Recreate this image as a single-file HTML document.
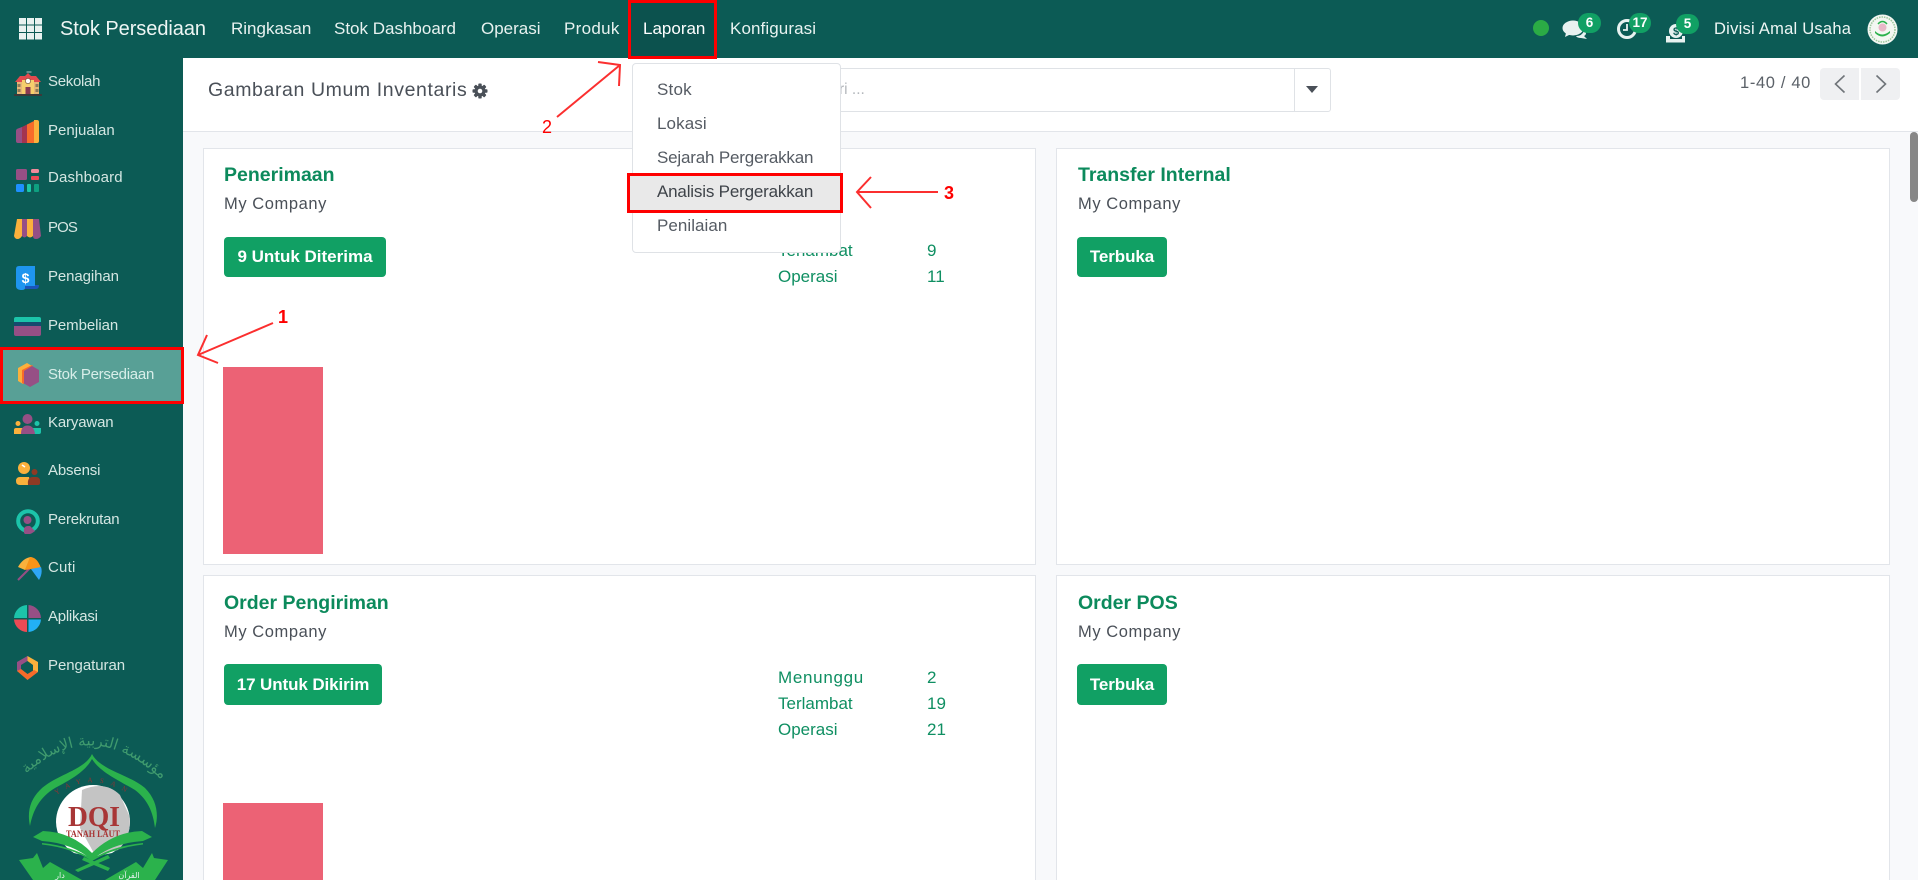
<!DOCTYPE html>
<html lang="id"><head><meta charset="utf-8"><title>Stok Persediaan</title>
<style>
html,body{margin:0;padding:0;width:1918px;height:880px;overflow:hidden;background:#f8f9fb}
body{position:relative;font-family:"Liberation Sans","Noto Sans CJK SC",sans-serif;color:#4a5058}
div,span,svg{position:absolute;box-sizing:border-box}
.t{white-space:nowrap;line-height:24px;height:24px}
.nav{color:#e8f2f0;font-size:17px;top:17px}
.side{color:#d4e6e2;font-size:15px;left:48px}
.card{background:#fff;border:1px solid #e2e5ea}
.title{color:#0c8a5c;font-size:19.5px;font-weight:bold}
.co{color:#4a5058;font-size:16.5px;letter-spacing:.57px}
.btn{background:#11a064;border-radius:4px;color:#fff;font-weight:bold;font-size:17px;text-align:center}
.st{color:#0f8f62;font-size:17px}
.mi{color:#555b63;font-size:17px;left:657px}
.bdg{background:#11a064;color:#fff;border-radius:11px;font-size:13.5px;font-weight:bold;text-align:center;height:20px;line-height:20px}
</style></head><body>

<div style="left:0;top:0;width:1918px;height:58px;background:#0c5b55"></div>
<div style="left:0;top:58px;width:183px;height:822px;background:#0c5b55"></div>
<div style="left:183px;top:58px;width:1735px;height:74px;background:#fff;border-bottom:1px solid #e2e5ea"></div>

<!-- apps grid -->
<svg style="left:19px;top:18px" width="23" height="22" viewBox="0 0 23 22" fill="#e8f2f0"><rect x="0" y="0" width="7" height="6.5"/><rect x="8" y="0" width="7" height="6.5"/><rect x="16" y="0" width="7" height="6.5"/><rect x="0" y="7.5" width="7" height="6.5"/><rect x="8" y="7.5" width="7" height="6.5"/><rect x="16" y="7.5" width="7" height="6.5"/><rect x="0" y="15" width="7" height="6.5"/><rect x="8" y="15" width="7" height="6.5"/><rect x="16" y="15" width="7" height="6.5"/></svg>
<span class="t" style="left:60px;top:17px;color:#eef6f4;font-size:20px;letter-spacing:-.05px">Stok Persediaan</span>
<span class="t nav" style="left:231px">Ringkasan</span>
<span class="t nav" style="left:334px">Stok Dashboard</span>
<span class="t nav" style="left:481px">Operasi</span>
<span class="t nav" style="left:564px;letter-spacing:.3px">Produk</span>
<div style="left:628px;top:0;width:89px;height:59px;background:#0c524e"></div>
<span class="t nav" style="left:643px;color:#fff">Laporan</span>
<span class="t nav" style="left:730px;letter-spacing:.1px">Konfigurasi</span>

<!-- systray -->
<div style="left:1533px;top:20px;width:16px;height:16px;border-radius:50%;background:#2bab45"></div>
<svg style="left:1562px;top:19px" width="26" height="22" viewBox="0 0 26 22" fill="#e8f2f0"><ellipse cx="11" cy="9" rx="10.5" ry="7.5"/><path d="M4 14 L3 18 L9 15Z"/><path d="M14 17 Q20 17 22 12 L24 14 Q24 16 22 17 L25 20 L19 19 Q15 19 14 17Z"/></svg>
<span class="bdg" style="left:1578px;top:13px;width:23px">6</span>
<svg style="left:1616px;top:18px" width="22" height="22" viewBox="0 0 22 22" fill="none" stroke="#e8f2f0"><circle cx="11" cy="11" r="8.5" stroke-width="3"/><path d="M11 6V12H7" stroke-width="1.8"/></svg>
<span class="bdg" style="left:1629px;top:13px;width:22px">17</span>
<svg style="left:1665px;top:23px" width="22" height="20" viewBox="0 0 22 20"><circle cx="11" cy="8" r="7" fill="#e8f2f0"/><rect x="1" y="13" width="4" height="4" fill="#e8f2f0"/><rect x="17" y="13" width="3" height="4" fill="#e8f2f0"/><rect x="1" y="16" width="19" height="3.5" fill="#e8f2f0"/><text x="11" y="12" font-size="11" font-weight="bold" text-anchor="middle" fill="#0c5b55" font-family="Liberation Sans">$</text></svg>
<span class="bdg" style="left:1676px;top:14px;width:23px">5</span>
<span class="t" style="left:1714px;top:17px;color:#eef6f4;font-size:16.5px;letter-spacing:.25px">Divisi Amal Usaha</span>
<svg style="left:1867px;top:14px" width="31" height="31" viewBox="0 0 31 31"><circle cx="15.5" cy="15.5" r="15" fill="#f3f7f2"/><circle cx="15.5" cy="15.5" r="12.5" fill="none" stroke="#9cc79c" stroke-width="1.5" stroke-dasharray="1.5 1"/><circle cx="15.5" cy="13.5" r="4" fill="#e8b8c8"/><path d="M8 17 Q15 24 23 17 L23 19 Q15 26 8 19Z" fill="#2bb24c"/><path d="M11 10 Q15.5 5 20 10" fill="none" stroke="#2bb24c" stroke-width="1.5"/></svg>

<!-- Sidebar -->
<div style="left:0;top:347px;width:184px;height:57px;background:#58a096;border:3px solid #fe0000"></div>

<svg style="left:14px;top:70px" width="28" height="27" viewBox="0 0 28 27"><rect x="12.5" y="1" width="5" height="2" fill="#5f8d8a"/><rect x="3" y="12" width="22" height="12" fill="#e7b676"/><path d="M1 12 L6 6 H22 L27 12Z" fill="#e24a4e"/><path d="M8 10 L14 4 L20 10 V24 H8Z" fill="#f6cf6c"/><path d="M7 10 L14 3 L21 10" fill="#e24a4e"/><circle cx="14" cy="11" r="2.6" fill="#fff" stroke="#7a5a3a" stroke-width=".7"/><rect x="11.5" y="17" width="5" height="7" fill="#8a3a52"/><rect x="3.5" y="14" width="3" height="3" fill="#8d7a5a"/><rect x="21.5" y="14" width="3" height="3" fill="#8d7a5a"/><rect x="3.5" y="19" width="3" height="3" fill="#8d7a5a"/><rect x="21.5" y="19" width="3" height="3" fill="#8d7a5a"/><rect x="0" y="24" width="28" height="2" fill="#3a3a3a"/></svg>

<svg style="left:16px;top:120px" width="23" height="23" viewBox="0 0 23 23"><path d="M0 11 Q0 9 2 8.500 L6 7 V23 H2 Q0 23 0 21Z" fill="#964f85"/><path d="M6 7 L11 4.500 V23 H6Z" fill="#a3344f"/><path d="M11 4.500 L18 1 V23 H11Z" fill="#f76b2a"/><path d="M18 0 H21 Q23 0 23 2 V21 Q23 23 21 23 H18Z" fill="#fbb13c"/></svg>

<svg style="left:16px;top:169px" width="23" height="23" viewBox="0 0 23 23"><rect width="11" height="11" rx="1.500" fill="#964f85"/><rect x="15" y="0" width="8" height="4" rx="1.500" fill="#f08a9a"/><rect x="15" y="7" width="8" height="4" rx="1" fill="#ee4a55"/><rect y="15" width="8" height="8" rx="1.500" fill="#1e90ff"/><rect x="11" y="15" width="4" height="8" rx="1" fill="#1cc8a8"/><rect x="18" y="15" width="5" height="8" rx="1" fill="#0ea080"/></svg>

<svg style="left:14px;top:219px" width="27" height="21" viewBox="0 0 27 21"><path d="M3 0 H8 L8 17 Q6 20 3.500 20 Q1 20 0 17Z" fill="#fbb13c"/><path d="M8 0 H13 V17 Q10.500 20 8 17Z" fill="#964f85"/><path d="M13 0 H19 V17 Q16 20 13 17Z" fill="#fbb13c"/><path d="M19 0 H25 L27 17 Q25 20 22 20 Q19 20 19 17Z" fill="#964f85"/></svg>

<svg style="left:16px;top:266px" width="24" height="25" viewBox="0 0 24 25"><path d="M8 19 H23 Q23 23 20 23 H8Z" fill="#1b55b8"/><path d="M3 0 H19 V20 H9 V22 Q9 24 6 24 Q0 24 0 20 V3 Q0 0 3 0Z" fill="#1e95ef"/><text x="9.500" y="17" font-size="14" font-weight="bold" text-anchor="middle" fill="#fff" font-family="Liberation Sans">$</text></svg>

<svg style="left:14px;top:317px" width="27" height="19" viewBox="0 0 27 19"><path d="M0 2 Q0 0 2 0 H25 Q27 0 27 2 V5 H0Z" fill="#1cc4aa"/><rect y="5" width="27" height="4" fill="#174a6e"/><path d="M0 9 H27 V17 Q27 19 25 19 H2 Q0 19 0 17Z" fill="#964f85"/></svg>

<svg style="left:18px;top:363px" width="21" height="24" viewBox="0 0 21 24"><path d="M9 0 L0 5 V18 L5 21 V8 L14 3Z" fill="#fbb13c"/><path d="M14 2 L4 7 V20 L6 21 V8 L15 3Z" fill="#f76b2a"/><path d="M14 3 L21 7 V19 L12 24 L6 20.500 V8Z" fill="#964f85"/></svg>

<svg style="left:14px;top:414px" width="27" height="20" viewBox="0 0 27 20"><path d="M14 14 H27 V18 Q27 20 25 20 H14Z" fill="#1cc4aa"/><path d="M0 20 V16 Q0 14 2 14 H12 V20Z" fill="#fbb13c"/><circle cx="4" cy="9.500" r="2.500" fill="#fbb13c"/><circle cx="23" cy="9.500" r="2.500" fill="#1cc4aa"/><circle cx="13.500" cy="5" r="5" fill="#964f85"/><path d="M7 20 Q7 11.500 13.500 11.500 Q20 11.500 21 20Z" fill="#964f85"/></svg>

<svg style="left:16px;top:462px" width="24" height="23" viewBox="0 0 24 23"><circle cx="8" cy="6" r="6" fill="#fbb13c"/><path d="M6 3 L9 5" stroke="#fff" stroke-width="1.500"/><circle cx="18.500" cy="10" r="3" fill="#8f3a24"/><path d="M0 19 Q0 15 4 15 H13 L15 23 H4 Q0 23 0 19Z" fill="#fbb13c"/><path d="M12 23 Q11 15 17 15 H20 Q24 15 24 19 V21 Q24 23 22 23Z" fill="#8f3a24"/></svg>

<svg style="left:16px;top:509px" width="24" height="25" viewBox="0 0 24 25"><circle cx="12" cy="12" r="9.800" fill="none" stroke="#1cc4aa" stroke-width="4"/><circle cx="11.500" cy="11" r="4" fill="#964f85"/><path d="M8 24 Q7 17 12 17 H14 L19 22 Q16 24.500 14 25 H9Z" fill="#964f85"/></svg>

<svg style="left:17px;top:556px" width="25" height="25" viewBox="0 0 25 25"><path d="M1 24 L13 12" stroke="#964f85" stroke-width="2"/><path d="M1 11 Q6 2 14 1 L13 3 L8 14Z" fill="#fbb13c"/><path d="M13 1 Q20 1 24 12 L14 13 L8 14Z" fill="#f99418"/><path d="M24 11 Q26 17 22 24 L14 13Z" fill="#2ea6f5"/></svg>

<svg style="left:14px;top:605px" width="27" height="27" viewBox="0 0 27 27"><path d="M13 0 V13 H0 A13.500 13.500 0 0 1 13 0Z" fill="#1cc4aa"/><path d="M14.500 0 A13.500 13.500 0 0 1 27 13 H14.500Z" fill="#964f85"/><path d="M0 14.500 H13 V27 A13.500 13.500 0 0 1 0 14.500Z" fill="#ee4a55"/><path d="M14.500 14.500 H27 A13.500 13.500 0 0 1 14.500 27Z" fill="#22b0f5"/></svg>

<svg style="left:17px;top:656px" width="21" height="24" viewBox="0 0 21 24"><path d="M10.500 0 L0 6 V15 L4 17 V9 L10.500 5Z" fill="#964f85"/><path d="M10.500 0 L21 6 V16 L16 15 V9 L10.500 5Z" fill="#fbb13c"/><path d="M0 15 L4 13 L10.500 18 L17 14 L21 16 L10.500 24Z" fill="#f76b2a"/><circle cx="10.500" cy="11.500" r="5" fill="#0c5b55"/></svg>

<span class="t side" style="top:70px;letter-spacing:-.3px">Sekolah</span>
<span class="t side" style="top:119px">Penjualan</span>
<span class="t side" style="top:166px;letter-spacing:.15px">Dashboard</span>
<span class="t side" style="top:216px;letter-spacing:-.9px">POS</span>
<span class="t side" style="top:265px;letter-spacing:-.1px">Penagihan</span>
<span class="t side" style="top:314px;letter-spacing:-.08px">Pembelian</span>
<span class="t side" style="top:363px;color:#d8eee9;letter-spacing:-.27px">Stok Persediaan</span>
<span class="t side" style="top:411px;letter-spacing:-.15px">Karyawan</span>
<span class="t side" style="top:459px;letter-spacing:-.15px">Absensi</span>
<span class="t side" style="top:508px;letter-spacing:-.2px">Perekrutan</span>
<span class="t side" style="top:556px;letter-spacing:.2px">Cuti</span>
<span class="t side" style="top:605px;letter-spacing:-.25px">Aplikasi</span>
<span class="t side" style="top:654px;letter-spacing:-.05px">Pengaturan</span>

<!-- Logo -->
<svg style="left:15px;top:725px" width="160" height="155" viewBox="15 725 160 155">
<defs><path id="arc" d="M24 776 Q92 712 164 782"/><path id="yy" d="M58 794 Q92 770 130 795"/></defs>
<text font-size="15" fill="#3f9a6e" font-family="DejaVu Sans,sans-serif"><textPath href="#arc" startOffset="50%" text-anchor="middle">مؤسسة التربية الإسلامية</textPath></text>
<path d="M92 754 C85 770 55 775 40 790 C30 800 27 812 30 826 C33 810 40 797 55 788 C70 780 85 772 92 759 C100 772 118 780 135 790 C148 800 153 812 155 828 C159 815 157 800 145 788 C130 775 100 770 92 754Z" fill="#2bb24c"/>
<text font-size="7" fill="#8f3434" font-family="Liberation Serif,serif" letter-spacing="7"><textPath href="#yy" startOffset="50%" text-anchor="middle">YAYASAN</textPath></text>
<path d="M56 822 A37 37 0 0 1 130 822 A37 37 0 0 1 112 853 L92 857 L74 853 A37 37 0 0 1 56 822Z" fill="#fff"/>
<path d="M129 815 A37 37 0 0 1 118 850 L95 855 L80 828 L82 790 Q105 780 120 795Z" fill="#c4c4c4"/>
<text x="94" y="826" text-anchor="middle" font-family="Liberation Serif,serif" font-size="28" font-weight="bold" fill="#a83636" textLength="52" lengthAdjust="spacingAndGlyphs">DQI</text>
<text x="93" y="837" text-anchor="middle" font-family="Liberation Serif,serif" font-size="9" font-weight="bold" fill="#a83636" textLength="54" lengthAdjust="spacingAndGlyphs">TANAH LAUT</text>
<path d="M33 837 L43 831 Q72 832 92 853 Q113 832 142 831 L152 837 L143 841 Q112 843 92 860 Q72 843 42 841Z" fill="#2bb24c"/>
<path d="M42 843 Q72 846 92 859 Q113 846 143 843 V844.500 Q113 848 92 861 Q72 848 42 844.500Z" fill="#2bb24c"/>
<path d="M75 870 L108 855 L110 858 L78 872Z M84 857 L110 868 L108 871 L82 860Z" fill="#2bb24c"/>
<path d="M19 860 L33 858 L37 853 L43 868 L50 862 L82 880 H33Z" fill="#2bb24c"/>
<path d="M168 860 L154 858 L152 853 L143 868 L136 862 L105 880 H155Z" fill="#2bb24c"/>
<text x="60" y="878" font-size="8" fill="#e8f2f0" font-family="DejaVu Sans,sans-serif" text-anchor="middle">دار</text>
<text x="129" y="878" font-size="8" fill="#e8f2f0" font-family="DejaVu Sans,sans-serif" text-anchor="middle">القرآن</text>
</svg>

<!-- Control panel -->
<span class="t" style="left:208px;top:78px;font-size:19.500px;letter-spacing:.6px;color:#4a5058">Gambaran Umum Inventaris</span>
<svg style="left:472px;top:83px" width="16" height="16" viewBox="0 0 16 16"><g fill="#4a5058"><circle cx="8" cy="8" r="5.500"/><rect x="6.300" y="0.500" width="3.400" height="15" rx=".8"/><rect x="6.300" y="0.500" width="3.400" height="15" rx=".8" transform="rotate(45 8 8)"/><rect x="6.300" y="0.500" width="3.400" height="15" rx=".8" transform="rotate(90 8 8)"/><rect x="6.300" y="0.500" width="3.400" height="15" rx=".8" transform="rotate(135 8 8)"/></g><circle cx="8" cy="8" r="2.300" fill="#fff"/></svg>

<div style="left:640px;top:68px;width:691px;height:44px;border:1px solid #dfe2e6;border-radius:3px;background:#fff"></div>
<div style="left:1294px;top:68px;width:1px;height:44px;background:#dfe2e6"></div>
<span class="t" style="left:839px;top:78px;font-size:15.500px;color:#b4b8bd">ri ...</span>
<svg style="left:1306px;top:86px" width="12" height="7" viewBox="0 0 12 7"><path d="M0 0H12L6 7Z" fill="#4a5058"/></svg>

<span class="t" style="left:1740px;top:71px;font-size:16.500px;letter-spacing:.65px;color:#5b6168">1-40 / 40</span>
<div style="left:1820px;top:68px;width:39px;height:32px;background:#eff0f2;border-radius:4px 0 0 4px"></div>
<div style="left:1861px;top:68px;width:39px;height:32px;background:#eff0f2;border-radius:0 4px 4px 0"></div>
<svg style="left:1834px;top:74px" width="12" height="20" viewBox="0 0 12 20"><path d="M10.500 1.500 L1.500 10 L10.500 18.500" fill="none" stroke="#6f7479" stroke-width="1.600"/></svg>
<svg style="left:1875px;top:74px" width="12" height="20" viewBox="0 0 12 20"><path d="M1.500 1.500 L10.500 10 L1.500 18.500" fill="none" stroke="#6f7479" stroke-width="1.600"/></svg>

<!-- Cards -->
<div class="card" style="left:203px;top:148px;width:833px;height:417px"></div>
<div class="card" style="left:1056px;top:148px;width:834px;height:417px"></div>
<div class="card" style="left:203px;top:575px;width:833px;height:310px"></div>
<div class="card" style="left:1056px;top:575px;width:834px;height:310px"></div>

<span class="t title" style="left:224px;top:163px">Penerimaan</span>
<span class="t co" style="left:224px;top:192px">My Company</span>
<div class="btn" style="left:224px;top:237px;width:162px;height:40px;line-height:40px">9 Untuk Diterima</div>
<div style="left:223px;top:367px;width:100px;height:187px;background:#ec6275"></div>
<span class="t st" style="left:778px;top:239px">Terlambat</span>
<span class="t st" style="left:778px;top:265px">Operasi</span>
<span class="t st" style="left:927px;top:239px">9</span>
<span class="t st" style="left:927px;top:265px">11</span>

<span class="t title" style="left:1078px;top:163px">Transfer Internal</span>
<span class="t co" style="left:1078px;top:192px">My Company</span>
<div class="btn" style="left:1077px;top:237px;width:90px;height:40px;line-height:40px;letter-spacing:-.1px">Terbuka</div>

<span class="t title" style="left:224px;top:591px">Order Pengiriman</span>
<span class="t co" style="left:224px;top:620px">My Company</span>
<div class="btn" style="left:224px;top:664px;width:158px;height:41px;line-height:41px;letter-spacing:-.1px">17 Untuk Dikirim</div>
<div style="left:223px;top:803px;width:100px;height:77px;background:#ec6275"></div>
<span class="t st" style="left:778px;top:666px;letter-spacing:.7px">Menunggu</span>
<span class="t st" style="left:778px;top:692px">Terlambat</span>
<span class="t st" style="left:778px;top:718px">Operasi</span>
<span class="t st" style="left:927px;top:666px">2</span>
<span class="t st" style="left:927px;top:692px">19</span>
<span class="t st" style="left:927px;top:718px">21</span>

<span class="t title" style="left:1078px;top:591px">Order POS</span>
<span class="t co" style="left:1078px;top:620px">My Company</span>
<div class="btn" style="left:1077px;top:664px;width:90px;height:41px;line-height:41px;letter-spacing:-.1px">Terbuka</div>

<!-- Scrollbar -->
<div style="left:1910px;top:132px;width:8px;height:70px;background:#878787;border-radius:4px"></div>

<!-- Dropdown -->
<div style="left:632px;top:63px;width:209px;height:190px;background:#fff;border:1px solid #dfe2e6;border-radius:4px"></div>
<span class="t mi" style="top:78px;letter-spacing:.2px">Stok</span>
<span class="t mi" style="top:112px;letter-spacing:.1px">Lokasi</span>
<span class="t mi" style="top:146px;letter-spacing:-.18px">Sejarah Pergerakkan</span>
<div style="left:627px;top:173px;width:216px;height:40px;background:#e9e9e9;border:3.500px solid #fe0000"></div>
<span class="t mi" style="top:180px;color:#3e4349;letter-spacing:-.18px">Analisis Pergerakkan</span>
<span class="t mi" style="top:214px;letter-spacing:.05px">Penilaian</span>

<!-- Annotations -->
<div style="left:628px;top:0;width:89px;height:59px;border:3.500px solid #fe0000"></div>
<svg style="left:0;top:0;overflow:visible" width="1918" height="880" viewBox="0 0 1918 880" fill="none" stroke="#fb2f2f" stroke-width="2">
<path d="M273 323 L198 355 M207 335 L198 355 L218 363"/>
<path d="M557 117 L620 65 M598 62 L620 65 L619 86"/>
<path d="M938 192 L857 192 M871 177 L857 192 L871 208"/>
</svg>
<span class="t" style="left:278px;top:305px;color:#fe0000;font-size:18px;font-weight:bold">1</span>
<span class="t" style="left:542px;top:115px;color:#fe0000;font-size:18px">2</span>
<span class="t" style="left:944px;top:181px;color:#fe0000;font-size:18px;font-weight:bold">3</span>

</body></html>
